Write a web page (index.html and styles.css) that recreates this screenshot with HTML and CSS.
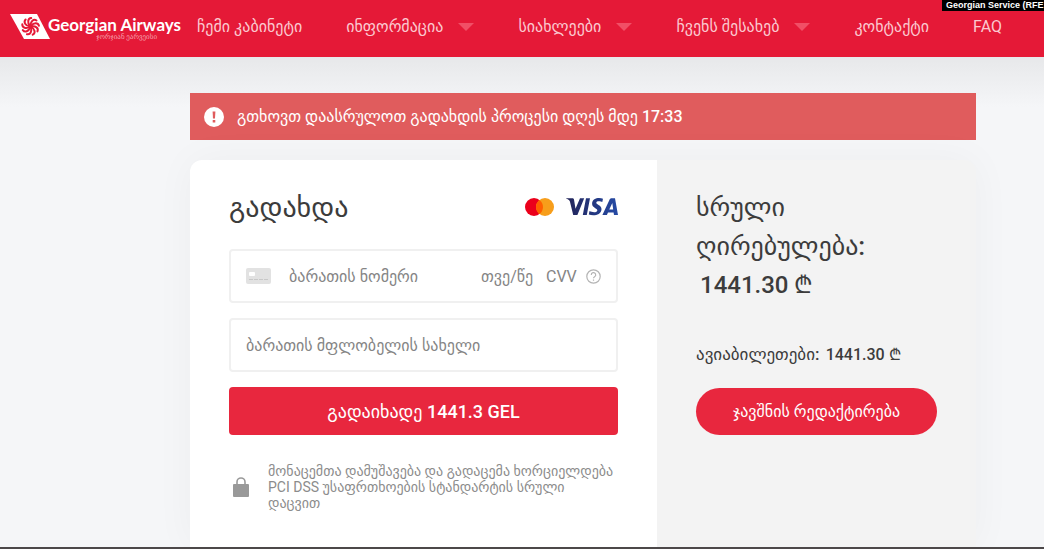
FILE: index.html
```html
<!DOCTYPE html>
<html lang="ka">
<head>
    <meta charset="UTF-8">
    <meta name="viewport" content="width=device-width, initial-scale=1.0">
    <title>Georgian Airways</title>
    <link rel="stylesheet" href="styles.css">
</head>
<body>
    <header class="header">
        <a href="#" class="logo">
            <svg class="logo-mark" viewBox="0 0 40 25" width="40" height="25">
                <path d="M0 0H27L40 25H14Z" fill="#fff"/>
                <g transform="translate(20.5 12.5)" fill="none" stroke="#e51937" stroke-width="2" stroke-linecap="round">
                    <path id="blade" d="M0 -1C0 -5 3 -8 6 -6"/>
                    <use href="#blade" transform="rotate(40)"/>
                    <use href="#blade" transform="rotate(80)"/>
                    <use href="#blade" transform="rotate(120)"/>
                    <use href="#blade" transform="rotate(160)"/>
                    <use href="#blade" transform="rotate(200)"/>
                    <use href="#blade" transform="rotate(240)"/>
                    <use href="#blade" transform="rotate(280)"/>
                    <use href="#blade" transform="rotate(320)"/>
                </g>
            </svg>
            <span class="logo-text">
                <span class="logo-name">Georgian Airways</span>
                <span class="logo-sub">ჯორჯიან ეარვეისი</span>
            </span>
        </a>
        <nav class="nav">
            <a href="#">ჩემი კაბინეტი</a>
            <a href="#" class="has-menu">ინფორმაცია</a>
            <a href="#" class="has-menu">სიახლეები</a>
            <a href="#" class="has-menu">ჩვენს შესახებ</a>
            <a href="#">კონტაქტი</a>
            <a href="#">FAQ</a>
        </nav>
        <div class="credit">Georgian Service (RFE</div>
    </header>

    <main class="main">
        <div class="alert">
            <svg viewBox="0 0 20 20" width="20" height="20">
                <circle cx="10" cy="10" r="10" fill="#fff"/>
                <path d="M8.6 4.5H11.4L11 11.5H9Z" fill="#e05c5d"/>
                <rect x="8.7" y="13" width="2.6" height="2.5" fill="#e05c5d"/>
            </svg>
            <span>გთხოვთ დაასრულოთ გადახდის პროცესი დღეს მდე 17:33</span>
        </div>

        <div class="card">
            <form class="payment">
                <div class="payment-head">
                    <h1>გადახდა</h1>
                    <div class="brands">
                        <svg viewBox="0 0 29 18" width="29" height="18">
                            <circle cx="9" cy="9" r="9" fill="#eb001b"/>
                            <circle cx="20" cy="9" r="9" fill="#f79e1b"/>
                            <path d="M14.5 1.9A9 9 0 0 1 14.5 16.1A9 9 0 0 1 14.5 1.9Z" fill="#ff5f00"/>
                        </svg>
                        <svg viewBox="0 0 52 18" width="52" height="18">
                            <defs>
                                <linearGradient id="visa" x1="0" x2="1">
                                    <stop offset="0" stop-color="#222357"/>
                                    <stop offset="1" stop-color="#254aa5"/>
                                </linearGradient>
                            </defs>
                            <path fill="url(#visa)" d="M0 .6 .1 .2H6.2C7.2 .2 7.8 .7 8 1.6L9.5 10.8 14 .2H18.2L11.4 17H7.2L3.9 3.5C3.6 2.4 1.8 1.1 0 .6ZM20 .2H24L20.8 17H16.8ZM37 .8 36.3 4.1C34.7 3.2 30.4 2.8 30.3 4.7C30.3 6.8 35.7 7 35.5 11.2C35.3 17.3 27.3 18.2 22.8 16.5L23.5 13C26 14.5 31.2 14.8 31.3 12.4C31.4 10.1 26 10 26.1 5.6C26.3 .1 33 -.9 37 .8ZM48 17 47.6 14.5H42L40.9 17H36.4L43.5 1.7C43.9 .7 44.6 .2 45.6 .2H49L52 17ZM43.3 11.4H47.2L46.3 5Z"/>
                        </svg>
                    </div>
                </div>

                <div class="field">
                    <svg viewBox="0 0 25 16" width="25" height="16">
                        <rect width="25" height="16" rx="2" fill="#e2e2e2"/>
                        <rect x="3" y="4" width="6" height="4" rx="1" fill="#fff"/>
                        <path d="M3 11.5H22" stroke="#c8c8c8" stroke-dasharray="4 1"/>
                    </svg>
                    <input type="text" class="number" placeholder="ბარათის ნომერი" aria-label="ბარათის ნომერი">
                    <input type="text" class="expiry" placeholder="თვე/წელი" aria-label="თვე/წელი">
                    <input type="text" class="cvv" placeholder="CVV" aria-label="CVV">
                    <svg viewBox="0 0 15 15" width="15" height="15" fill="none" stroke="#b4b4b4" stroke-width="1.2">
                        <circle cx="7.5" cy="7.5" r="6.7"/>
                        <path d="M5.3 6A2.2 2.2 0 1 1 8.6 7.7C7.8 8.2 7.5 8.5 7.5 9.3M7.5 10.5V11.8"/>
                    </svg>
                </div>
                <div class="field">
                    <input type="text" class="holder" placeholder="ბარათის მფლობელის სახელი" aria-label="ბარათის მფლობელის სახელი">
                </div>
                <button type="submit" class="pay">გადაიხადე 1441.3 GEL</button>

                <div class="secure">
                    <svg viewBox="0 0 16 20" width="16" height="20">
                        <rect y="7" width="16" height="13" rx="1" fill="#999"/>
                        <path d="M4 8V5A4 4 0 0 1 12 5V8" fill="none" stroke="#999" stroke-width="1.6"/>
                    </svg>
                    <p>მონაცემთა დამუშავება და გადაცემა ხორციელდება PCI DSS უსაფრთხოების სტანდარტის სრული დაცვით</p>
                </div>
            </form>

            <aside class="summary">
                <h2>სრული ღირებულება: <span class="total">1441.30 ₾</span></h2>
                <p class="line">ავიაბილეთები: <span>1441.30 ₾</span></p>
                <button type="button" class="edit">ჯავშნის რედაქტირება</button>
            </aside>
        </div>
    </main>
</body>
</html>
```
FILE: styles.css
```css
* {
    box-sizing: border-box;
}
body {
    margin: 0;
    min-height: 100vh;
    display: flex;
    flex-direction: column;
    font-family: Roboto, "DejaVu Sans", sans-serif;
    color: #3c3c3c;
    background-color: #f5f6f8;
    border-bottom: 2px solid #4c4849;
}
.header {
    position: relative;
    display: flex;
    align-items: center;
    height: 57px;
    padding: 0 42px 4px 10px;
    background-color: #e51937;
}
.logo {
    display: flex;
    align-items: center;
    flex: none;
    width: 187px;
    color: #fff;
    text-decoration: none;
}
.logo-mark {
    flex: none;
}
.logo-text {
    display: flex;
    flex-direction: column;
    align-items: flex-end;
    margin-left: -2px;
    padding-top: 4px;
}
.logo-name {
    font: bold 17px/18px Lato, sans-serif;
    white-space: nowrap;
}
.logo-sub {
    margin-right: 24px;
    font-size: 7px;
    line-height: 7px;
    color: #f6a3af;
}
.nav {
    flex: 1;
    display: flex;
    justify-content: space-between;
    align-items: center;
}
.nav a {
    display: flex;
    align-items: center;
    font-size: 16px;
    line-height: 20px;
    color: #fbc9d0;
    text-decoration: none;
    white-space: nowrap;
}
.has-menu::after {
    content: "";
    margin-left: 15px;
    border: 8px solid transparent;
    border-top-color: #f14f66;
    border-bottom: 0;
}
.credit {
    position: absolute;
    top: 0;
    right: 0;
    width: 102px;
    padding-left: 4px;
    overflow: hidden;
    white-space: nowrap;
    font: bold 9px/11px "Liberation Sans", sans-serif;
    color: #fff;
    background-color: #000;
}

.main {
    flex: 1;
    display: flex;
    flex-direction: column;
    gap: 20px;
    padding: 36px 68px 0 190px;
    background: linear-gradient(#e7e8ea, #f5f6f8 50px);
}
.alert {
    display: flex;
    align-items: center;
    gap: 13px;
    height: 47px;
    padding: 0 14px;
    font-size: 16px;
    font-weight: 500;
    color: #fff;
    background-color: #e05c5d;
}
.card {
    flex: 1;
    display: grid;
    grid-template-columns: minmax(0, 467fr) minmax(0, 319fr);
    border-radius: 12px 12px 0 0;
    background-color: #f3f3f3;
    box-shadow: 0 0 40px rgba(0, 0, 0, 0.04);
}
.payment {
    display: flex;
    flex-direction: column;
    gap: 15px;
    padding: 27px 39px 34px;
    border-radius: 12px 0 0 0;
    background-color: #fff;
}
.payment-head {
    display: flex;
    justify-content: space-between;
    align-items: center;
    height: 40px;
    margin-bottom: 7px;
}
h1, h2 {
    margin: 0;
    font-size: 26px;
    line-height: 39px;
    font-weight: 500;
}
h1 {
    font-size: 28px;
}
.brands {
    display: flex;
    gap: 12px;
}
.field {
    display: flex;
    align-items: center;
    height: 54px;
    padding: 0 15px;
    border: 2px solid #f0f0f0;
    border-radius: 4px;
}
.field input {
    min-width: 0;
    padding: 0;
    border: 0;
    outline: 0;
    background: none;
    font: inherit;
    font-size: 16px;
}
.field input::placeholder {
    color: #858585;
    opacity: 1;
}
.field .number {
    flex: 1;
    margin: 0 14px 0 18px;
}
.field .expiry {
    width: 52px;
    margin-right: 13px;
}
.field .cvv {
    width: 40px;
}
.field .holder {
    flex: 1;
}
.pay, .edit {
    border: 0;
    font: inherit;
    font-weight: 500;
    color: #fff;
    background-color: #e8273e;
    cursor: pointer;
}
.pay {
    height: 48px;
    border-radius: 4px;
    font-size: 18px;
}
.secure {
    display: flex;
    align-items: center;
    gap: 19px;
    padding: 13px 0 0 4px;
    font-size: 14px;
    line-height: 16px;
    color: #8c8c8c;
}
.secure svg {
    flex: none;
}
.secure p {
    margin: 0;
}

.summary {
    padding: 28px 39px;
}
.total {
    display: block;
    padding-left: 4px;
    font-size: 24px;
}
.line {
    margin: 38px 0 22px;
    font-size: 17px;
    line-height: 22px;
    font-weight: 500;
    white-space: nowrap;
}
.line span {
    margin-left: 2px;
    font-size: 16px;
}
.edit {
    width: 100%;
    height: 47px;
    border-radius: 24px;
    font-size: 16px;
}
```
